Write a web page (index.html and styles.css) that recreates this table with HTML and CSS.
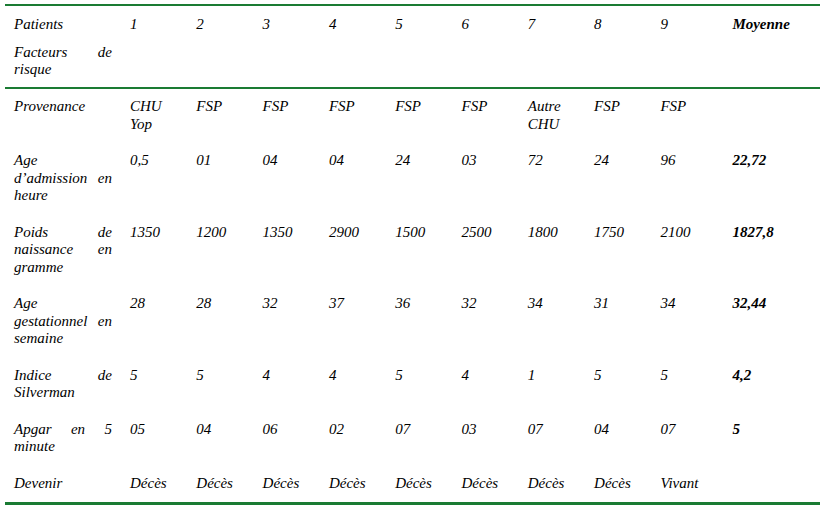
FILE: index.html
```html
<!DOCTYPE html>
<html lang="fr">
<head>
<meta charset="utf-8">
<title>Facteurs de risque</title>
<link rel="stylesheet" href="styles.css">
</head>
<body>
<div class="wrap">
<table class="data">
  <colgroup>
    <col class="c-label">
    <col class="c-num"><col class="c-num"><col class="c-num"><col class="c-num">
    <col class="c-num"><col class="c-num"><col class="c-num"><col class="c-num">
    <col class="c-nine">
    <col class="c-avg">
  </colgroup>
  <thead>
    <tr class="h1">
      <th class="label">Patients</th>
      <th>1</th><th>2</th><th>3</th><th>4</th><th>5</th><th>6</th><th>7</th><th>8</th><th>9</th>
      <th class="avg">Moyenne</th>
    </tr>
    <tr class="h2">
      <th class="label">Facteurs de risque</th>
      <th></th><th></th><th></th><th></th><th></th><th></th><th></th><th></th><th></th><th></th>
    </tr>
  </thead>
  <tbody>
    <tr>
      <td class="label">Provenance</td>
      <td>CHU Yop</td><td>FSP</td><td>FSP</td><td>FSP</td><td>FSP</td><td>FSP</td><td>Autre CHU</td><td>FSP</td><td>FSP</td><td class="avg"></td>
    </tr>
    <tr>
      <td class="label">Age d’admission en heure</td>
      <td>0,5</td><td>01</td><td>04</td><td>04</td><td>24</td><td>03</td><td>72</td><td>24</td><td>96</td><td class="avg">22,72</td>
    </tr>
    <tr>
      <td class="label">Poids de naissance en gramme</td>
      <td>1350</td><td>1200</td><td>1350</td><td>2900</td><td>1500</td><td>2500</td><td>1800</td><td>1750</td><td>2100</td><td class="avg">1827,8</td>
    </tr>
    <tr>
      <td class="label">Age gestationnel en semaine</td>
      <td>28</td><td>28</td><td>32</td><td>37</td><td>36</td><td>32</td><td>34</td><td>31</td><td>34</td><td class="avg">32,44</td>
    </tr>
    <tr>
      <td class="label">Indice de Silverman</td>
      <td>5</td><td>5</td><td>4</td><td>4</td><td>5</td><td>4</td><td>1</td><td>5</td><td>5</td><td class="avg">4,2</td>
    </tr>
    <tr>
      <td class="label">Apgar en 5 minute</td>
      <td>05</td><td>04</td><td>06</td><td>02</td><td>07</td><td>03</td><td>07</td><td>04</td><td>07</td><td class="avg">5</td>
    </tr>
    <tr class="last">
      <td class="label">Devenir</td>
      <td>Décès</td><td>Décès</td><td>Décès</td><td>Décès</td><td>Décès</td><td>Décès</td><td>Décès</td><td>Décès</td><td>Vivant</td><td class="avg"></td>
    </tr>
  </tbody>
</table>
</div>
</body>
</html>
```
FILE: styles.css
```css
html, body {
  margin: 0;
  padding: 0;
  background: #ffffff;
}

.wrap {
  padding: 4px 0 0 5px;
}

.data {
  width: 815px;
  table-layout: fixed;
  border-collapse: collapse;
  font-family: "Liberation Serif", "Times New Roman", serif;
  font-style: italic;
  font-size: 15px;
  line-height: 17.5px;
  color: #000;
  border-top: 2px solid #1a7b33;
  border-bottom: 3px solid #1a7b33;
}

.c-label { width: 125px; }
.c-num { width: 66.3px; }
.c-nine { width: 72px; }
.c-avg { width: 88px; }

.data th,
.data td {
  font-weight: normal;
  text-align: left;
  vertical-align: top;
  padding: 9.5px 10px 9.5px 0;
}

.data .label {
  padding-left: 9px;
  padding-right: 18px;
  text-align: justify;
}

.data .avg {
  font-weight: bold;
}

.data .h1 th {
  padding-bottom: 1px;
}

.data .h2 th {
  padding-top: 9.5px;
  padding-bottom: 8px;
}

.data thead {
  border-bottom: 2px solid #1a7b33;
}
```
